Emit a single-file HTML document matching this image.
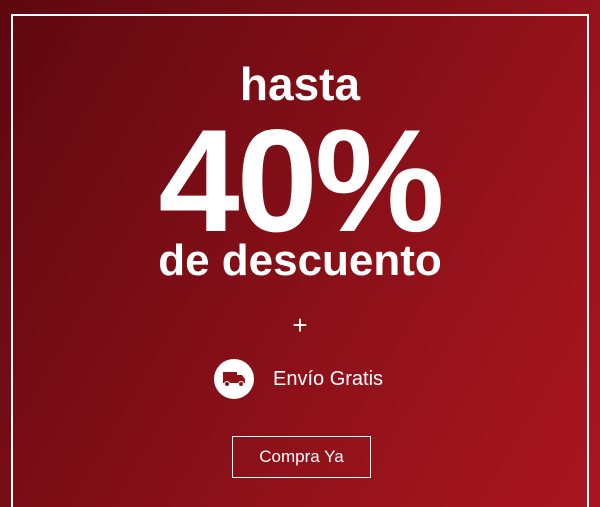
<!DOCTYPE html>
<html><head><meta charset="utf-8"><style>
html,body{margin:0;padding:0;overflow:hidden;width:600px;height:507px}
body{position:relative;background:linear-gradient(120deg,#5e0810 0%,#7e0e16 40%,#9a131c 75%,#aa1620 100%);font-family:"Liberation Sans",sans-serif;color:#fff}
.frame{position:absolute;left:11px;top:14px;width:574px;height:500px;border:2px solid #fff;border-bottom:none}
.t{position:absolute;left:0;width:600px;text-align:center;line-height:1;white-space:nowrap}
.btn{position:absolute;left:232px;top:436px;width:137px;height:40px;border:1px solid #fff;font-size:17px;line-height:40px;text-align:center}
.ic{position:absolute;left:214px;top:359px;width:40px;height:40px;border-radius:50%;background:#fff}
</style></head><body>
<div class="frame"></div>
<div class="t" style="top:61px;font-size:46px;font-weight:bold">hasta</div>
<div class="t" style="top:108px;font-size:146px;font-weight:bold;letter-spacing:-3px">40%</div>
<div class="t" style="top:239px;font-size:44px;font-weight:bold">de descuento</div>
<div class="t" style="top:312px;font-size:26px">+</div>
<div class="ic"><svg width="40" height="40" viewBox="0 0 40 40"><rect x="9" y="13" width="14" height="11" fill="#8e111a"/><path d="M23 16h5l3 4v4h-8z" fill="#8e111a"/><circle cx="13" cy="25" r="2.5" fill="#8e111a" stroke="#fff" stroke-width="1"/><circle cx="27" cy="25" r="2.5" fill="#8e111a" stroke="#fff" stroke-width="1"/></svg></div>
<div style="position:absolute;left:273px;top:369px;font-size:20px;line-height:1">Envío Gratis</div>
<div class="btn">Compra Ya</div>
</body></html>
